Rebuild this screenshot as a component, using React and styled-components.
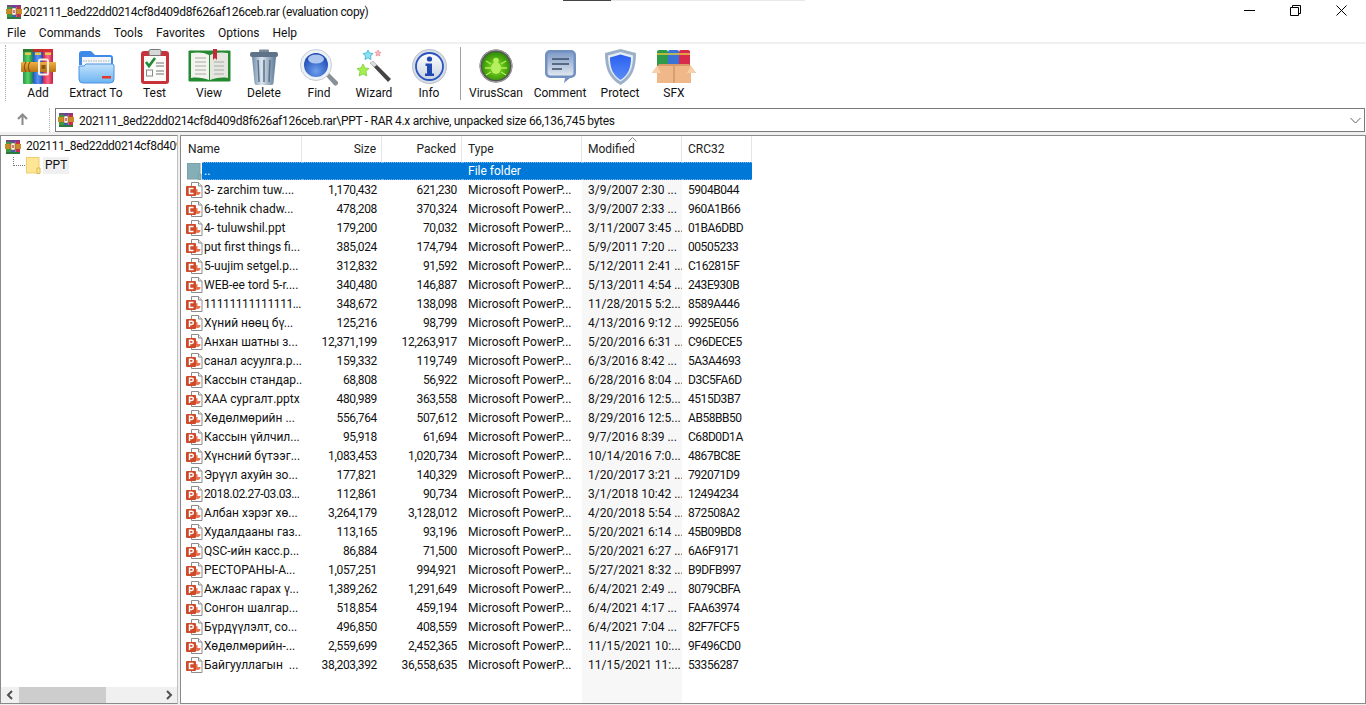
import styled, { createGlobalStyle } from "styled-components";

const GlobalStyle = createGlobalStyle`
  html, body { margin: 0; padding: 0; height: 100%; background: #fff; overflow: hidden; }
  #root { height: 100%; }
  * { box-sizing: border-box; }
`;

const files = [
  ["3- zarchim tuw....", "1,170,432", "621,230", "3/9/2007 2:30 ...", "5904B044", true],
  ["6-tehnik chadw...", "478,208", "370,324", "3/9/2007 2:33 ...", "960A1B66", true],
  ["4- tuluwshil.ppt", "179,200", "70,032", "3/11/2007 3:45 ...", "01BA6DBD", true],
  ["put first things fi...", "385,024", "174,794", "5/9/2011 7:20 ...", "00505233", true],
  ["5-uujim setgel.p...", "312,832", "91,592", "5/12/2011 2:41 ...", "C162815F", true],
  ["WEB-ee tord 5-r....", "340,480", "146,887", "5/13/2011 4:54 ...", "243E930B", true],
  ["11111111111111...", "348,672", "138,098", "11/28/2015 5:2...", "8589A446", true],
  ["Хүний нөөц бү...", "125,216", "98,799", "4/13/2016 9:12 ...", "9925E056"],
  ["Анхан шатны з...", "12,371,199", "12,263,917", "5/20/2016 6:31 ...", "C96DECE5"],
  ["санал асуулга.р...", "159,332", "119,749", "6/3/2016 8:42 ...", "5A3A4693"],
  ["Кассын стандар...", "68,808", "56,922", "6/28/2016 8:04 ...", "D3C5FA6D"],
  ["ХАА сургалт.pptx", "480,989", "363,558", "8/29/2016 12:5...", "4515D3B7"],
  ["Хөдөлмөрийн ...", "556,764", "507,612", "8/29/2016 12:5...", "AB58BB50"],
  ["Кассын үйлчил...", "95,918", "61,694", "9/7/2016 8:39 ...", "C68D0D1A"],
  ["Хүнсний бүтээг...", "1,083,453", "1,020,734", "10/14/2016 7:0...", "4867BC8E"],
  ["Эрүүл ахуйн зо...", "177,821", "140,329", "1/20/2017 3:21 ...", "792071D9"],
  ["2018.02.27-03.03...", "112,861", "90,734", "3/1/2018 10:42 ...", "12494234"],
  ["Албан хэрэг хө...", "3,264,179", "3,128,012", "4/20/2018 5:54 ...", "872508A2"],
  ["Худалдааны газ...", "113,165", "93,196", "5/20/2021 6:14 ...", "45B09BD8"],
  ["QSC-ийн касс.р...", "86,884", "71,500", "5/20/2021 6:27 ...", "6A6F9171"],
  ["РЕСТОРАНЫ-А...", "1,057,251", "994,921", "5/27/2021 8:32 ...", "B9DFB997"],
  ["Ажлаас гарах ү...", "1,389,262", "1,291,649", "6/4/2021 2:49 ...", "8079CBFA"],
  ["Сонгон шалгар...", "518,854", "459,194", "6/4/2021 4:17 ...", "FAA63974"],
  ["Бүрдүүлэлт, со...", "496,850", "408,559", "6/4/2021 7:04 ...", "82F7FCF5"],
  ["Хөдөлмөрийн-...", "2,559,699", "2,452,365", "11/15/2021 10:...", "9F496CD0"],
  ["Байгууллагын  ...", "38,203,392", "36,558,635", "11/15/2021 11:...", "53356287", true],
];

const Window = styled.div`
  position: relative;
  width: 1366px;
  height: 705px;
  display: flex;
  flex-direction: column;
  background: #fff;
  color: #000;
  font-family: Roboto, "Open Sans", sans-serif;
  font-size: 12px;
  overflow: hidden;
`;

const ScreenEdge = styled.div`
  position: absolute;
  top: 0;
  left: 563px;
  width: 242px;
  height: 1px;
  background: linear-gradient(to right, #444 0 48px, #e8e8e8 48px);
`;

const TitleBar = styled.div`
  height: 23px;
  display: flex;
  align-items: center;
  padding: 0 2px 0 6px;
  flex: none;
`;

const TitleText = styled.div`
  flex: 1;
  margin-left: 1px;
  font-size: 12px;
  letter-spacing: -0.31px;
  color: #111;
`;

const WinButton = styled.div`
  width: 46px;
  height: 21px;
  display: flex;
  align-items: center;
  justify-content: center;
  align-self: flex-start;
`;

const MenuBar = styled.div`
  height: 18px;
  margin-top: 1px;
  display: flex;
  align-items: center;
  padding-left: 7px;
  gap: 13px;
  flex: none;
`;

const MenuItem = styled.span`
  font-size: 12px;
  color: #111;
`;

const Divider = styled.div`
  height: 2px;
  background: #f0f0f0;
  flex: none;
`;

const Toolbar = styled.div`
  height: 61px;
  display: flex;
  align-items: stretch;
  padding-left: 5px;
  flex: none;
`;

const Grip = styled.div`
  width: 1px;
  margin: 1px 5px 4px 0;
  border-left: 1px dotted #a8a8a8;
  flex: none;
`;

const ToolButton = styled.div`
  width: ${(p) => p.$w}px;
  display: flex;
  flex-direction: column;
  align-items: center;
  flex: none;
`;

const ToolIcon = styled.div`
  height: 41px;
  padding-top: 5px;
  display: flex;
  justify-content: center;
`;

const ToolLabel = styled.div`
  margin-top: 1px;
  font-size: 12px;
  line-height: 15px;
  color: #111;
  white-space: nowrap;
`;

const ToolSep = styled.div`
  width: 1px;
  background: #a0a0a0;
  margin: 3px 4px 5px;
  flex: none;
`;

const AddressRow = styled.div`
  height: 27px;
  display: flex;
  align-items: flex-start;
  padding: 3px 1px 0 0;
  flex: none;
`;

const UpButton = styled.div`
  width: 44px;
  height: 22px;
  display: flex;
  align-items: center;
  justify-content: center;
  flex: none;
`;

const AddressGrip = styled.div`
  width: 1px;
  height: 24px;
  margin: 0 5px;
  border-left: 1px dotted #b0b0b0;
  flex: none;
`;

const AddressBox = styled.div`
  flex: 1;
  height: 24px;
  display: flex;
  align-items: center;
  padding: 0 3px 0 2px;
  border: 1px solid #7a7a7a;
  gap: 5px;
`;

const AddressText = styled.div`
  flex: 1;
  padding-top: 1px;
  font-size: 12px;
  letter-spacing: -0.29px;
  color: #111;
  white-space: nowrap;
`;

const Panes = styled.div`
  flex: 1;
  min-height: 0;
  display: flex;
  gap: 2px;
  padding: 3px 0 1px;
  background: #f0f0f0;
`;

const TreePane = styled.div`
  width: 178px;
  display: flex;
  flex-direction: column;
  background: #fff;
  border: 1px solid #8a8a8a;
  border-right-color: #c0c0c0;
  flex: none;
`;

const TreeBody = styled.div`
  flex: 1;
  min-height: 0;
  padding: 1px 0 0 4px;
  overflow: hidden;
`;

const TreeRow = styled.div`
  height: 19px;
  display: flex;
  align-items: center;
  gap: ${(p) => p.$gap}px;
  white-space: nowrap;
  overflow: hidden;
  padding-left: ${(p) => p.$indent || 0}px;
`;

const TreeLines = styled.div`
  width: 12px;
  height: 9px;
  margin-top: -8px;
  border-left: 1px dotted #777;
  border-bottom: 1px dotted #777;
  flex: none;
`;

const TreeLabel = styled.span`
  min-width: 0;
  overflow: hidden;
  font-size: 12px;
  line-height: 17px;
  letter-spacing: ${(p) => (p.$current ? "0" : "-0.3px")};
  color: #111;
  padding: 0 ${(p) => (p.$current ? "2px" : "0")};
  margin-left: ${(p) => (p.$current ? "1px" : "0")};
  background: ${(p) => (p.$current ? "#f0f0f0" : "transparent")};
`;

const HScroll = styled.div`
  height: 16px;
  display: flex;
  align-items: stretch;
  background: #f0f0f0;
  flex: none;
`;

const ScrollArrow = styled.div`
  width: 17px;
  display: flex;
  align-items: center;
  justify-content: center;
  flex: none;
`;

const ScrollTrack = styled.div`
  flex: 1;
`;

const ScrollThumb = styled.div`
  width: 87px;
  height: 100%;
  margin-left: 1px;
  background: #cdcdcd;
`;

const ListPane = styled.div`
  flex: 1;
  min-width: 0;
  display: flex;
  flex-direction: column;
  background: #fff;
  border: 1px solid #8a8a8a;
`;

const HeaderRow = styled.div`
  height: 26px;
  display: flex;
  padding-left: 1px;
  flex: none;
`;

const HeaderCell = styled.div`
  position: relative;
  width: ${(p) => p.$w}px;
  padding: 0 5px 1px 6px;
  display: flex;
  align-items: center;
  justify-content: ${(p) => (p.$right ? "flex-end" : "flex-start")};
  border-right: 1px solid #e5e5e5;
  font-size: 12px;
  color: #222;
  flex: none;
`;

const SortCaret = styled.svg`
  position: absolute;
  top: 1px;
  left: 46px;
`;

const ListBody = styled.div`
  flex: 1;
  min-height: 0;
  padding-left: 1px;
  background: linear-gradient(to right, transparent 401px, #f7f7f7 401px, #f7f7f7 501px, transparent 501px);
`;

const Row = styled.div`
  width: ${(p) => (p.$selected ? "570px" : "auto")};
  height: ${(p) => (p.$selected ? "18px" : "19px")};
  display: flex;
  align-items: center;
`;

const NameCell = styled.div`
  width: 120px;
  display: flex;
  align-items: center;
  padding-left: ${(p) => (p.$selected ? "5px" : "4px")};
  flex: none;
`;

const NameText = styled.span`
  flex: 1;
  height: 18px;
  padding-left: ${(p) => (p.$selected ? "2px" : "1px")};
  line-height: ${(p) => (p.$selected ? "16px" : "18px")};
  font-size: 12px;
  letter-spacing: ${(p) => p.$tight || 0}px;
  white-space: pre;
  overflow: hidden;
  color: ${(p) => (p.$selected ? "#fff" : "#111")};
  background: ${(p) => (p.$selected ? "#0078d7" : "transparent")};
  border-block: ${(p) => (p.$selected ? "1px dotted #7fb8ea" : "0")};
`;

const Cell = styled.div`
  width: ${(p) => p.$w}px;
  height: 18px;
  padding: 0 ${(p) => (p.$right ? "5px" : "1px")} 0 6px;
  font-size: 12px;
  line-height: ${(p) => (p.$selected ? "16px" : "18px")};
  letter-spacing: ${(p) => p.$tight || 0}px;
  text-align: ${(p) => (p.$right ? "right" : "left")};
  white-space: pre;
  overflow: hidden;
  color: ${(p) => (p.$selected ? "#fff" : "#111")};
  background: ${(p) => (p.$selected ? "#0078d7" : "transparent")};
  border-block: ${(p) => (p.$selected ? "1px dotted #7fb8ea" : "0")};
  flex: none;
`;

const FixedSvg = styled.svg`
  flex: none;
`;

const RarBooks = () => (
  <FixedSvg width="16" height="16" viewBox="0 0 16 16">
    <rect x="1" y="1" width="5" height="14" fill="#3c9a3e" />
    <rect x="6" y="1" width="4.500" height="14" fill="#3462c8" />
    <rect x="10.500" y="1" width="4.500" height="14" fill="#c8304a" />
    <rect x="1" y="1" width="14" height="2" fill="#7c3a8c" opacity=".8" />
    <rect x="0" y="5" width="16" height="5" fill="#c98a2a" />
    <rect x="6" y="4" width="4" height="7" fill="#fff" stroke="#8a5a18" strokeWidth=".6" />
    <rect x="7.400" y="6" width="1.200" height="3" fill="#b02020" />
    <rect x="1" y="13" width="14" height="2" fill="#2c7a3e" />
  </FixedSvg>
);

const AddIcon = () => (
  <svg width="36" height="36" viewBox="0 0 36 36">
    <defs>
      <linearGradient id="bookG" x1="0" x2="1"><stop offset="0" stopColor="#1f9a45" /><stop offset=".5" stopColor="#5cd06a" /><stop offset="1" stopColor="#18863c" /></linearGradient>
      <linearGradient id="bookB" x1="0" x2="1"><stop offset="0" stopColor="#1f55c8" /><stop offset=".5" stopColor="#5d96f0" /><stop offset="1" stopColor="#1b48b0" /></linearGradient>
      <linearGradient id="bookR" x1="0" x2="1"><stop offset="0" stopColor="#d81f50" /><stop offset=".5" stopColor="#f86a88" /><stop offset="1" stopColor="#c41a44" /></linearGradient>
      <linearGradient id="belt" x1="0" y1="0" x2="0" y2="1"><stop offset="0" stopColor="#f0b040" /><stop offset="1" stopColor="#b87418" /></linearGradient>
    </defs>
    <rect x="3" y="0" width="10" height="35" rx="1" fill="url(#bookG)" />
    <rect x="13" y="0" width="10" height="35" rx="1" fill="url(#bookB)" />
    <rect x="23" y="0" width="10" height="35" rx="1" fill="url(#bookR)" />
    <rect x="3" y="0" width="10" height="3" fill="#2f7a33" />
    <rect x="13" y="0" width="10" height="3" fill="#c02f2a" />
    <rect x="23" y="0" width="10" height="3" fill="#d82a3a" />
    <rect x="5" y="3.500" width="6" height="2.500" fill="#e8c84a" />
    <rect x="15" y="3.500" width="6" height="2.500" fill="#e8c84a" />
    <rect x="25" y="3.500" width="6" height="2.500" fill="#e8c84a" />
    <rect x="1" y="13" width="35" height="10" rx="1" fill="url(#belt)" />
    <path d="M6 13c-2 3-2 7 0 10M10 13c-2 3-2 7 0 10" fill="none" stroke="#8a5612" strokeWidth="1.200" />
    <rect x="19" y="10.500" width="9" height="15" rx="1.500" fill="none" stroke="#f5f0e0" strokeWidth="2" />
    <rect x="21.500" y="16" width="4" height="4" fill="#8a5612" />
  </svg>
);

const ExtractIcon = () => (
  <svg width="37" height="36" viewBox="0 0 37 36">
    <defs>
      <linearGradient id="fold" x1="0" y1="0" x2="0" y2="1"><stop offset="0" stopColor="#c4e2fb" /><stop offset="1" stopColor="#6cb4f2" /></linearGradient>
    </defs>
    <path d="M1 5a3 3 0 0 1 3-3h9l4 4h15a3 3 0 0 1 3 3v7H1z" fill="#3f8ae8" />
    <path d="M4 8h29v10H4z" fill="#f4f6f8" />
    <path d="M5 12h27" stroke="#c0c6d0" strokeWidth="1.500" strokeDasharray="1.500 1" />
    <path d="M1 17h5l2-2h27a2 2 0 0 1 1 2v13a4 4 0 0 1-4 4H5a4 4 0 0 1-4-4z" fill="url(#fold)" stroke="#4a92e6" />
    <rect x="24" y="27" width="9" height="2.500" fill="#e2382a" />
  </svg>
);

const TestIcon = () => (
  <svg width="30" height="36" viewBox="0 0 30 36">
    <rect x="1" y="2" width="28" height="33" rx="3" fill="#c8323a" />
    <rect x="4" y="7" width="22" height="25" fill="#fbfbf8" />
    <rect x="9" y="0.500" width="12" height="6" rx="1.500" fill="#d8d8d8" stroke="#777" />
    <path d="M6 13l3 4 6-8" fill="none" stroke="#1e8a34" strokeWidth="2.600" />
    <path d="M16 14h8M16 17h8" stroke="#777" strokeWidth="1.200" />
    <rect x="6.500" y="21" width="6" height="6" fill="none" stroke="#888" />
    <path d="M16 22h8M16 25h8" stroke="#777" strokeWidth="1.200" />
  </svg>
);

const ViewIcon = () => (
  <svg width="43" height="34" viewBox="0 0 43 34">
    <rect x="0.500" y="1.500" width="42" height="31" rx="1" fill="#238a32" />
    <path d="M3 4c6-1 13-1 18 2v25c-5-2-12-3-18-2z" fill="#f4f4ee" />
    <path d="M40 4c-6-1-13-1-18 2v25c5-2 12-3 18-2z" fill="#e6e6e0" />
    <path d="M7 9h11M7 13h11M7 17h11M7 21h11M7 25h11M26 13h10M26 17h10M26 21h10M26 25h10" stroke="#a8a8a8" strokeWidth="1.100" />
    <path d="M25 0h4v11l-2-2-2 2z" fill="#c8283a" />
  </svg>
);

const DeleteIcon = () => (
  <svg width="30" height="36" viewBox="0 0 30 36">
    <defs>
      <linearGradient id="bin" x1="0" x2="1"><stop offset="0" stopColor="#6f8aa8" /><stop offset=".4" stopColor="#dce5ee" /><stop offset="1" stopColor="#5c7896" /></linearGradient>
    </defs>
    <rect x="10" y="0.500" width="10" height="3" rx="1" fill="#7a8a9a" />
    <rect x="1" y="3" width="28" height="5" rx="2" fill="#5f7388" />
    <path d="M3 8h24l-2.500 26a2 2 0 0 1-2 2h-15a2 2 0 0 1-2-2z" fill="url(#bin)" />
    <path d="M9 11l1 22M15 11v22M21 11l-1 22" stroke="#5b738c" strokeWidth="1.500" />
  </svg>
);

const FindIcon = () => (
  <svg width="38" height="37" viewBox="0 0 38 37">
    <defs>
      <radialGradient id="lens" cx=".5" cy=".75" r=".7"><stop offset="0" stopColor="#6ea0ee" /><stop offset="1" stopColor="#1a45b0" /></radialGradient>
    </defs>
    <path d="M25 26l3-3 9 9a2 2 0 0 1-3 4z" fill="#8a9098" />
    <circle cx="16" cy="16" r="15.500" fill="#eef2f7" stroke="#c6ced8" />
    <circle cx="16" cy="16" r="12" fill="url(#lens)" />
    <ellipse cx="16" cy="10" rx="8" ry="4.500" fill="#c2d8f8" opacity=".85" />
  </svg>
);

const WizardIcon = () => (
  <svg width="34" height="34" viewBox="0 0 34 34">
    <path d="M13 14l3-2 18 18-3 3z" fill="#444" />
    <path d="M13 14l3-2 4 4-3 2z" fill="#ddd" />
    <path d="M6 15l2 4 4 .5-3 3 .8 4.500L6 25l-4 2 1-4.500-3-3 4-.5z" fill="#a6ee50" stroke="#60c020" strokeWidth=".6" />
    <path d="M11 1l1.500 3 3.500.5-2.500 2.500.5 3.500-3-1.700-3 1.700.5-3.500L6 4.500 9.500 4z" fill="#8fe0f0" stroke="#30b0d8" strokeWidth=".8" />
    <path d="M21 1l1 2 2 .3-1.500 1.500.4 2.200-1.900-1-1.900 1 .4-2.200L18 3.300l2-.3z" fill="#f8b8c0" stroke="#e88090" strokeWidth=".6" />
  </svg>
);

const InfoIcon = () => (
  <svg width="35" height="35" viewBox="0 0 35 35">
    <defs>
      <linearGradient id="inf" x1="0" y1="0" x2="0" y2="1"><stop offset="0" stopColor="#fff" /><stop offset="1" stopColor="#c8d2e0" /></linearGradient>
    </defs>
    <circle cx="17.500" cy="17.500" r="17" fill="#d8dde4" stroke="#b8c0cc" />
    <circle cx="17.500" cy="17.500" r="13.500" fill="url(#inf)" stroke="#2a55c0" strokeWidth="1.800" />
    <circle cx="17.500" cy="10" r="2.600" fill="#1f48b0" />
    <path d="M13.500 14.500h6.500v10h2v2.500h-9v-2.500h2v-7.500h-1.500z" fill="#1f48b0" />
  </svg>
);

const VirusIcon = () => (
  <svg width="34" height="34" viewBox="0 0 34 34">
    <defs>
      <radialGradient id="vir" cx=".5" cy=".55" r=".55"><stop offset="0" stopColor="#8ee820" /><stop offset="1" stopColor="#2f8a0a" /></radialGradient>
    </defs>
    <circle cx="17" cy="17" r="16.500" fill="#555" />
    <circle cx="17" cy="17" r="16" fill="none" stroke="#aaa" />
    <circle cx="17" cy="17" r="14" fill="url(#vir)" />
    <ellipse cx="17" cy="19" rx="5" ry="6" fill="#b4f060" />
    <circle cx="17" cy="11.500" r="2.800" fill="#b4f060" />
    <path d="M12 15l-5-3M12 19H6M12 23l-5 3M22 15l5-3M22 19h6M22 23l5 3" stroke="#b4f060" strokeWidth="1.300" />
  </svg>
);

const CommentIcon = () => (
  <svg width="33" height="34" viewBox="0 0 33 34">
    <defs>
      <linearGradient id="com" x1="0" y1="0" x2="0" y2="1"><stop offset="0" stopColor="#7f9cc8" /><stop offset="1" stopColor="#dfe6ef" /></linearGradient>
    </defs>
    <path d="M6 1h21a5 5 0 0 1 5 5v18a5 5 0 0 1-5 5h-1l-6 5 1-5H6a5 5 0 0 1-5-5V6a5 5 0 0 1 5-5z" fill="#7391c0" />
    <rect x="3.500" y="3.500" width="26" height="23" rx="3" fill="url(#com)" />
    <path d="M8 10h17M8 15h17M8 20h10" stroke="#3c4c66" strokeWidth="1.500" />
  </svg>
);

const ProtectIcon = () => (
  <svg width="31" height="36" viewBox="0 0 31 36">
    <defs>
      <linearGradient id="shi" x1="0" y1="0" x2="0" y2="1"><stop offset="0" stopColor="#2a60f0" /><stop offset="1" stopColor="#5a8cf8" /></linearGradient>
    </defs>
    <path d="M15.500 0L31 4c0 14-3 25-15.500 32C3 29 0 18 0 4z" fill="#9cb0c8" />
    <path d="M15.500 3L28 6.500c0 12-3 20-12.500 26C6 26.500 3 18.500 3 6.500z" fill="#e6edf5" />
    <path d="M15.500 5.500L26 8.500c0 10-2.500 17.500-10.500 22.500C7.500 26 5 18.500 5 8.500z" fill="url(#shi)" />
  </svg>
);

const SfxIcon = () => (
  <svg width="44" height="34" viewBox="0 0 44 34">
    <rect x="5" y="1" width="11" height="18" rx="2" fill="#2e9a4a" />
    <rect x="16" y="1" width="11" height="18" rx="2" fill="#3a72d8" />
    <rect x="27" y="1" width="11" height="18" rx="2" fill="#d82a4a" />
    <path d="M5 5h11M16 5h11M27 5h11" stroke="#e8c840" strokeWidth="1.500" />
    <path d="M7 15h30l7 9H0z" fill="#d89a68" />
    <rect x="5" y="17" width="34" height="17" fill="#f0b888" />
    <path d="M22 17v17" stroke="#c08858" />
    <path d="M5 17L0 24h9zM39 17l5 7h-9z" fill="#f8d0a8" />
  </svg>
);

const PptIcon = ({ legacy }) => (
  <FixedSvg width="17" height="16" viewBox="0 0 17 16">
    <path d="M5.500.5h7l3.500 3.500v11.500H5.500z" fill="#fff" stroke="#8c8c8c" />
    <path d="M12.500.5v3.500H16" fill="#eee" stroke="#8c8c8c" />
    <path d="M11.500 7a3 3 0 1 0 3 3h-3z" fill="#e8623a" opacity=".9" />
    <rect x="0" y="4" width="10" height="10" rx="1" fill="#cf4a2a" />
    {legacy ? (
      <path d="M7.500 6.500H3.500v5h4" fill="none" stroke="#fff" strokeWidth="1.600" />
    ) : (
      <path d="M3.500 12V6.200h2.200a1.500 1.500 0 0 1 0 3.300H3.500" fill="none" stroke="#fff" strokeWidth="1.400" />
    )}
  </FixedSvg>
);

const FolderPage = ({ dim }) => (
  <FixedSvg width="15" height="17" viewBox="0 0 15 17">
    <rect x="0.500" y="0.500" width="12.500" height="15.500" fill={dim ? "#84afb6" : "#ffe694"} stroke={dim ? "#7aa2a8" : "#eccf70"} />
    <path d="M11 11h3v5.500h-3z" fill={dim ? "#84afb6" : "#ffe694"} stroke={dim ? "#7aa2a8" : "#dcb850"} />
  </FixedSvg>
);

const ChevronLeft = () => (
  <svg width="8" height="10" viewBox="0 0 8 10"><path d="M6 1L2 5l4 4" fill="none" stroke="#505050" strokeWidth="2" /></svg>
);

const ChevronRight = () => (
  <svg width="8" height="10" viewBox="0 0 8 10"><path d="M2 1l4 4-4 4" fill="none" stroke="#505050" strokeWidth="2" /></svg>
);

const tools = [
  { label: "Add", w: 54, Icon: AddIcon },
  { label: "Extract To", w: 62, Icon: ExtractIcon },
  { label: "Test", w: 55, Icon: TestIcon },
  { label: "View", w: 54, Icon: ViewIcon },
  { label: "Delete", w: 56, Icon: DeleteIcon },
  { label: "Find", w: 54, Icon: FindIcon },
  { label: "Wizard", w: 56, Icon: WizardIcon },
  { label: "Info", w: 54, Icon: InfoIcon },
  { sep: true, label: "sep" },
  { label: "VirusScan", w: 62, Icon: VirusIcon },
  { label: "Comment", w: 66, Icon: CommentIcon },
  { label: "Protect", w: 54, Icon: ProtectIcon },
  { label: "SFX", w: 54, Icon: SfxIcon },
];

const columns = [
  { label: "Name", w: 120 },
  { label: "Size", w: 80, right: true },
  { label: "Packed", w: 80, right: true },
  { label: "Type", w: 120 },
  { label: "Modified", w: 100, sorted: true },
  { label: "CRC32", w: 70 },
];

export default function App() {
  return (
    <Window>
      <GlobalStyle />
      <ScreenEdge />
      <TitleBar>
        <RarBooks />
        <TitleText>202111_8ed22dd0214cf8d409d8f626af126ceb.rar (evaluation copy)</TitleText>
        <WinButton>
          <svg width="11" height="11" viewBox="0 0 11 11"><path d="M0 5.500h11" stroke="#000" /></svg>
        </WinButton>
        <WinButton>
          <svg width="11" height="11" viewBox="0 0 11 11"><path d="M.5 2.500h8v8h-8zM2.500 2.500v-2h8v8h-2" fill="none" stroke="#000" /></svg>
        </WinButton>
        <WinButton>
          <svg width="11" height="11" viewBox="0 0 11 11"><path d="M.5.500l10 10M10.500.500l-10 10" stroke="#000" /></svg>
        </WinButton>
      </TitleBar>
      <MenuBar>
        {["File", "Commands", "Tools", "Favorites", "Options", "Help"].map((m) => (
          <MenuItem key={m}>{m}</MenuItem>
        ))}
      </MenuBar>
      <Divider />
      <Toolbar>
        <Grip />
        {tools.map(({ label, w, Icon, sep }) =>
          sep ? (
            <ToolSep key={label} />
          ) : (
            <ToolButton key={label} $w={w}>
              <ToolIcon>
                <Icon />
              </ToolIcon>
              <ToolLabel>{label}</ToolLabel>
            </ToolButton>
          )
        )}
      </Toolbar>
      <AddressRow>
        <UpButton>
          <svg width="11" height="12" viewBox="0 0 11 12"><path d="M5.500 12V2M1 6l4.500-4.500L10 6" fill="none" stroke="#8a8a8a" strokeWidth="2" /></svg>
        </UpButton>
        <AddressGrip />
        <AddressBox>
          <RarBooks />
          <AddressText>202111_8ed22dd0214cf8d409d8f626af126ceb.rar\PPT - RAR 4.x archive, unpacked size 66,136,745 bytes</AddressText>
          <svg width="11" height="7" viewBox="0 0 11 7"><path d="M.5 1l5 5 5-5" fill="none" stroke="#606060" /></svg>
        </AddressBox>
      </AddressRow>
      <Panes>
        <TreePane>
          <TreeBody>
            <TreeRow $gap={5}>
              <RarBooks />
              <TreeLabel>202111_8ed22dd0214cf8d409d8f626af126ceb.rar</TreeLabel>
            </TreeRow>
            <TreeRow $gap={1} $indent={8}>
              <TreeLines />
              <FolderPage />
              <TreeLabel $current>PPT</TreeLabel>
            </TreeRow>
          </TreeBody>
          <HScroll>
            <ScrollArrow><ChevronLeft /></ScrollArrow>
            <ScrollTrack><ScrollThumb /></ScrollTrack>
            <ScrollArrow><ChevronRight /></ScrollArrow>
          </HScroll>
        </TreePane>
        <ListPane>
          <HeaderRow>
            {columns.map((c) => (
              <HeaderCell key={c.label} $w={c.w} $right={c.right}>
                {c.sorted && (
                  <SortCaret width="9" height="5" viewBox="0 0 9 5"><path d="M.5 4.500l4-4 4 4" fill="none" stroke="#888" /></SortCaret>
                )}
                {c.label}
              </HeaderCell>
            ))}
          </HeaderRow>
          <ListBody>
            <Row $selected>
              <NameCell $selected>
                <FolderPage dim />
                <NameText $selected>..</NameText>
              </NameCell>
              <Cell $w={80} $selected />
              <Cell $w={80} $selected />
              <Cell $w={120} $selected>File folder</Cell>
              <Cell $w={100} $selected />
              <Cell $w={70} $selected />
            </Row>
            {files.map((f) => (
              <Row key={f[4]}>
                <NameCell>
                  <PptIcon legacy={f[5]} />
                  <NameText $tight={/^\d{4}/.test(f[0]) ? -0.4 : 0}>{f[0]}</NameText>
                </NameCell>
                <Cell $w={80} $right $tight={-0.33}>{f[1]}</Cell>
                <Cell $w={80} $right $tight={-0.33}>{f[2]}</Cell>
                <Cell $w={120}>Microsoft PowerP...</Cell>
                <Cell $w={100}>{f[3]}</Cell>
                <Cell $w={70} $tight={-0.45}>{f[4]}</Cell>
              </Row>
            ))}
          </ListBody>
        </ListPane>
      </Panes>
    </Window>
  );
}
